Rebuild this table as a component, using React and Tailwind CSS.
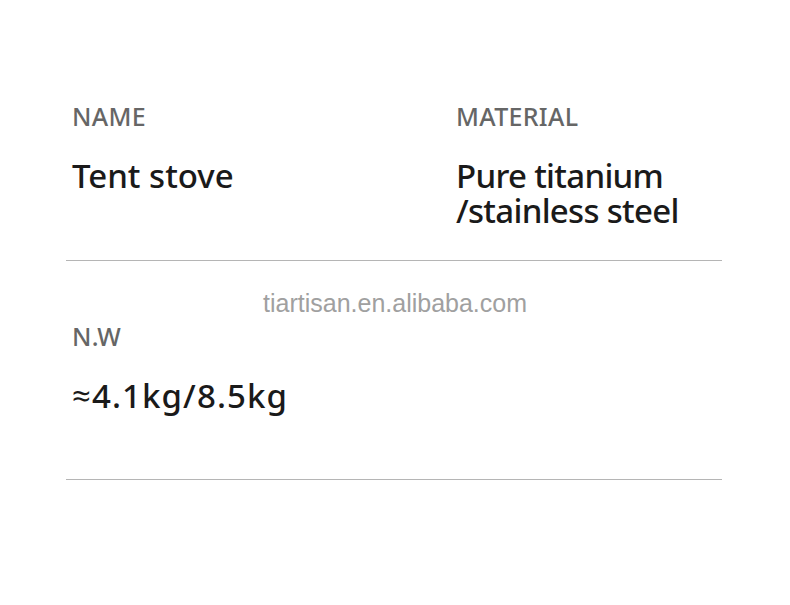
import React from "react";

const Label = ({ children }) => (
  <div className="text-[25px] leading-[30px] font-medium tracking-[0.3px] text-[#666666]">{children}</div>
);

const Value = ({ children, className = "" }) => (
  <div className={`text-[33px] leading-[35px] font-medium text-[#1a1a1a] ${className}`}>{children}</div>
);

export default function App() {
  return (
    <div
      className="w-[790px] h-[605px] bg-white pt-[101px] pl-[66px]"
      style={{ fontFamily: '"Noto Sans", "Open Sans", sans-serif' }}
    >
      <div className="w-[656px]">
        {/* first row */}
        <div className="grid grid-cols-[383px_1fr] pb-[32px] border-b border-[#b5b5b5]">
          <div className="pl-[6px]">
            <Label>NAME</Label>
            <div className="mt-[27px]">
              <Value>Tent stove</Value>
            </div>
          </div>
          <div className="pl-[7px]">
            <Label>MATERIAL</Label>
            <div className="mt-[27px]">
              <Value className="tracking-[-0.7px]">
                Pure titanium
                <br />
                /stainless steel
              </Value>
            </div>
          </div>
        </div>

        {/* watermark */}
        <div
          className="relative h-0"
          style={{ fontFamily: '"Liberation Sans", Arial, sans-serif' }}
        >
          <div className="absolute left-[197px] top-[28px] text-[25px] leading-[29px] text-[#a0a0a0]">
            tiartisan.en.alibaba.com
          </div>
        </div>

        {/* second row */}
        <div className="pt-[60px] pb-[66px] pl-[6px] border-b border-[#b5b5b5]">
          <Label>N.W</Label>
          <div className="mt-[27px]">
            <Value className="tracking-[1.1px]">≈4.1kg/8.5kg</Value>
          </div>
        </div>
      </div>
    </div>
  );
}
